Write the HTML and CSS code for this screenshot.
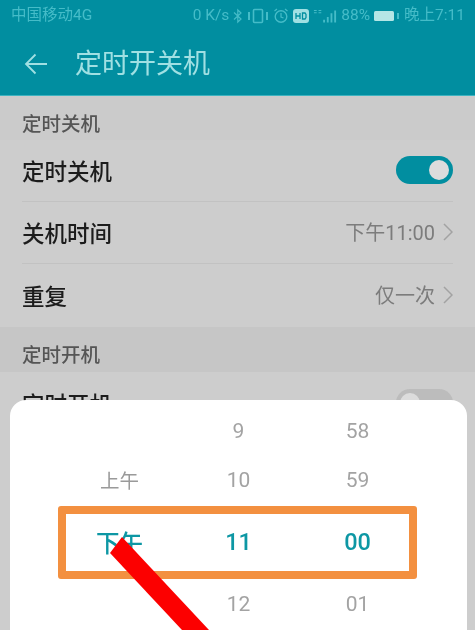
FILE: index.html
```html
<!DOCTYPE html>
<html lang="zh-CN">
<head>
<meta charset="utf-8">
<title>定时开关机</title>
<link rel="stylesheet" href="styles.css">
</head>
<body>
<div class="screen">
  <header class="appbar">
    <div class="status">
      <span class="carrier">中国移动4G</span>
      <div class="status-right">
        <span>0 K/s</span>
        <svg class="ic" width="10" height="16" viewBox="0 0 10 16"><path d="M1 4.500 8 11 4.800 14V2L8 5 1 11.500" fill="none" stroke="currentColor" stroke-width="1.200"/></svg>
        <svg class="ic" width="22" height="16" viewBox="0 0 22 16"><rect x="6.500" y="1.500" width="9" height="13" rx="1" fill="none" stroke="currentColor" stroke-width="1.600"/><path d="M2 4v8M20 4v8" stroke="currentColor" stroke-width="2"/></svg>
        <svg class="ic" width="16" height="16" viewBox="0 0 16 16"><circle cx="8" cy="8.500" r="5.800" fill="none" stroke="currentColor" stroke-width="1.400"/><path d="M8 5v4l2.500 1M1.500 3 4 1M14.500 3 12 1" fill="none" stroke="currentColor" stroke-width="1.200"/></svg>
        <svg class="ic" width="16" height="14" viewBox="0 0 16 14"><rect width="16" height="14" rx="3" fill="#a0e0e3"/><path d="M3 4v6M7 4v6M3 7h4M9.500 4v6h2.500l1-1.500v-3L12 4z" fill="none" stroke="#018ea0" stroke-width="1.300"/></svg>
        <svg class="ic signal" width="24" height="16" viewBox="0 0 26 16"><path d="M1 2h3M1 4.500h3M6 2h3M6 4.500h3" stroke="currentColor" stroke-width="1.200"/><path d="M11 12h2v3h-2zM15 9h2v6h-2zM19 5h2v10h-2zM23 2h2v13h-2z" fill="currentColor"/></svg>
        <span>88%</span>
        <svg class="ic" width="26" height="12" viewBox="0 0 26 12"><rect x="0" y="1" width="20" height="10" rx="1.500" fill="#b5e6e6"/><rect x="23" y="3" width="2" height="6" fill="currentColor"/></svg>
        <span>晚上7:11</span>
      </div>
    </div>
    <div class="toolbar">
      <svg class="back" width="24" height="22" viewBox="0 0 24 22"><path d="M23 11H2M11.500 1.500 2 11l9.500 9.500" fill="none" stroke="currentColor" stroke-width="1.800"/></svg>
      <h1 class="title">定时开关机</h1>
    </div>
  </header>

  <main class="settings">
    <div class="section first">定时关机</div>
    <div class="row">
      <span class="label">定时关机</span>
      <span class="switch on"><i class="knob"></i></span>
    </div>
    <div class="row">
      <span class="label">关机时间</span>
      <span class="value">下午11:00<svg class="chev" width="10" height="18" viewBox="0 0 10 18"><path d="M1 1l8 8-8 8" fill="none" stroke="currentColor" stroke-width="1.500"/></svg></span>
    </div>
    <div class="row last">
      <span class="label">重复</span>
      <span class="value">仅一次<svg class="chev" width="10" height="18" viewBox="0 0 10 18"><path d="M1 1l8 8-8 8" fill="none" stroke="currentColor" stroke-width="1.500"/></svg></span>
    </div>
    <div class="section second">定时开机</div>
    <div class="row last">
      <span class="label">定时开机</span>
      <span class="switch off"><i class="knob"></i></span>
    </div>
  </main>

  <section class="sheet">
    <div class="picker">
      <div class="cell"></div><div class="cell">9</div><div class="cell">58</div>
      <div class="cell cjk">上午</div><div class="cell">10</div><div class="cell">59</div>
      <div class="cell sel">下午</div><div class="cell sel">11</div><div class="cell sel">00</div>
      <div class="cell"></div><div class="cell">12</div><div class="cell">01</div>
    </div>
    <div class="highlight"></div>
  </section>

  <svg class="arrow" width="475" height="630" viewBox="0 0 475 630"><polygon points="110,553 122,537 209,630 182,630" fill="#fc0000"/></svg>
</div>
</body>
</html>
```
FILE: styles.css
```css
* { box-sizing: border-box; }
html, body { margin: 0; padding: 0; }
body {
  width: 475px;
  height: 630px;
  overflow: hidden;
  font-family: "Roboto", "Noto Sans CJK SC", sans-serif;
}
.screen {
  position: relative;
  width: 475px;
  height: 630px;
  overflow: hidden;
  background: #cdcdcd;
}
.appbar {
  height: 96px;
  background: #018ea0;
  color: #45bcc8;
  border-bottom: 1px solid #3db3c0;
}
.status {
  height: 32px;
  padding: 0 10px 0 11px;
  display: flex;
  align-items: center;
  justify-content: space-between;
  font-size: 15.500px;
  line-height: 1;
  filter: blur(0.5px);
}
.status-right { display: flex; align-items: center; gap: 4px; }
.ic { display: block; flex: none; }
.toolbar {
  height: 63px;
  padding: 1px 0 0 24px;
  display: flex;
  align-items: center;
  gap: 27px;
  color: #a0e0e3;
  filter: blur(0.5px);
}
.back { display: block; }
.title {
  margin: 0;
  font-size: 27px;
  font-weight: 400;
  line-height: 1;
  color: #a0e0e3;
}
.settings { display: flex; flex-direction: column; filter: blur(0.5px); }
.section {
  height: 45px;
  padding: 8px 22px 0;
  display: flex;
  align-items: center;
  font-size: 19.500px;
  font-weight: 500;
  color: #555;
  background: #c6c6c6;
}
.section.first { height: 44px; background: #cbcbcb; }
.row {
  height: 62px;
  margin: 0 22px;
  padding-bottom: 2px;
  display: flex;
  align-items: center;
  justify-content: space-between;
  border-bottom: 1px solid #c2c2c2;
}
.row.last { height: 63px; border-bottom: 0; }
.label { font-size: 22.500px; color: #1c1c1c; font-weight: 500; }
.value {
  display: flex;
  align-items: center;
  gap: 8px;
  font-size: 20px;
  color: #7c7c7c;
}
.chev { display: block; color: #a2a2a2; }
.switch {
  width: 57px;
  height: 28px;
  border-radius: 14px;
  display: flex;
  align-items: center;
  padding: 0 4px;
}
.switch.on { background: #018ea0; justify-content: flex-end; }
.switch.off { background: #bcbcbc; justify-content: flex-start; }
.knob { display: block; width: 20px; height: 20px; border-radius: 50%; background: #dcdcdc; }
.sheet {
  position: absolute;
  left: 10px;
  top: 400px;
  width: 457px;
  height: 250px;
  background: #fff;
  border-radius: 16px;
}
.picker {
  margin-left: 50px;
  padding-top: 6px;
  display: grid;
  grid-template-columns: repeat(3, 119px);
  grid-template-rows: 50px 47px 78px 46px;
  filter: blur(0.4px);
}
.cell {
  display: flex;
  align-items: center;
  justify-content: center;
  font-size: 21px;
  color: #a3a3a3;
}
.cell.cjk { font-size: 19.500px; color: #9a9a9a; }
.cell.sel { color: #0d97a4; font-weight: 500; font-size: 23.500px; }
.highlight {
  position: absolute;
  left: 48px;
  top: 106px;
  width: 359px;
  height: 73px;
  border: 8px solid #f39040;
  border-radius: 3px;
}
.arrow { position: absolute; left: 0; top: 0; display: block; }
```
